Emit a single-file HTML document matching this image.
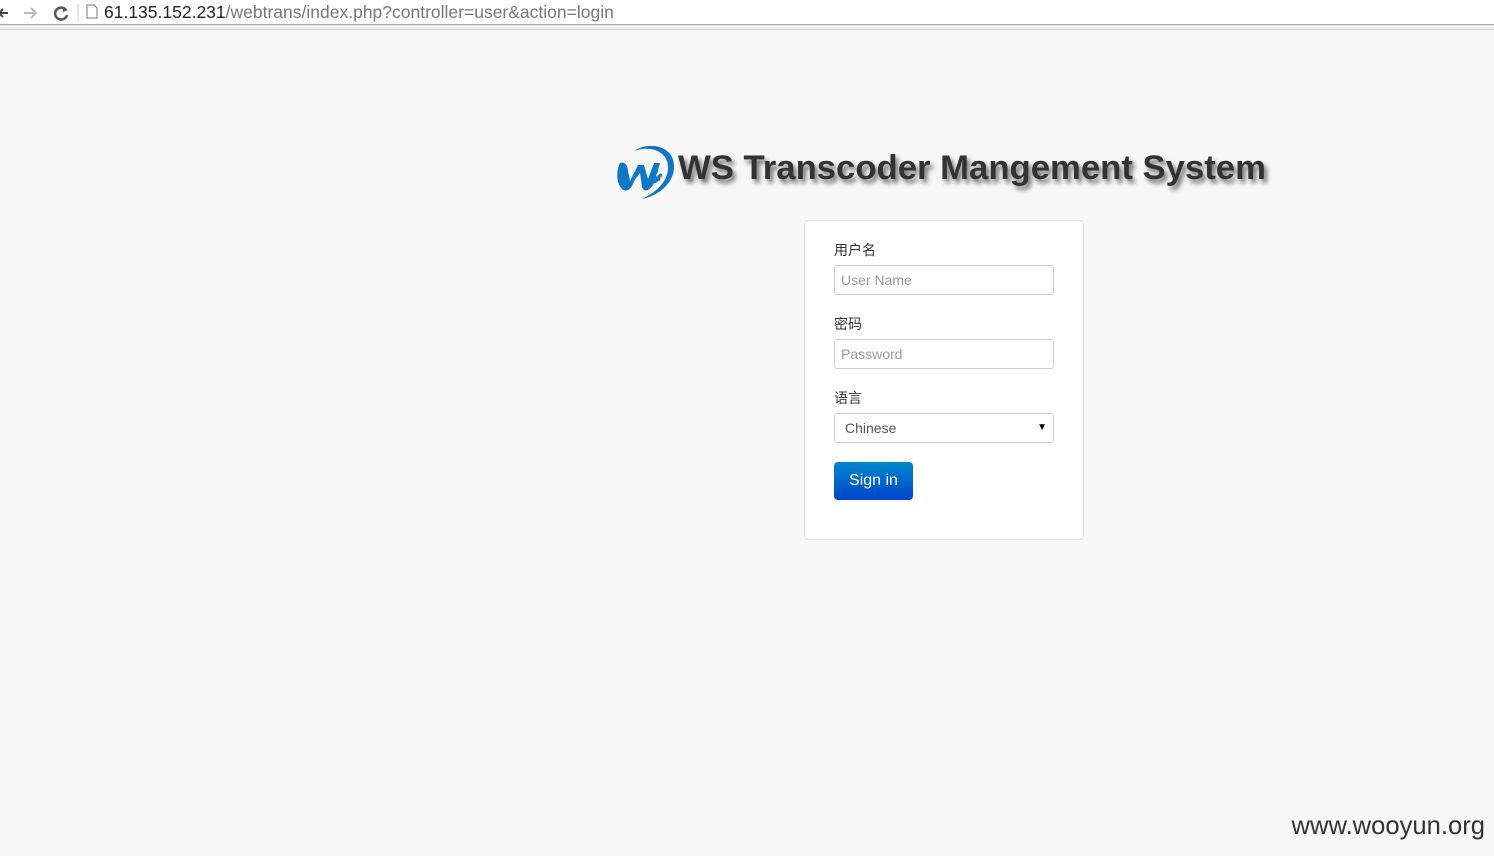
<!DOCTYPE html>
<html><head><meta charset="utf-8"><style>
body{margin:0;width:1494px;height:856px;background:#f7f7f7;font-family:"Liberation Sans","Noto Sans CJK SC",sans-serif;position:relative;overflow:hidden}
.bar{position:absolute;left:0;top:0;width:1494px;height:24px;background:#fff;border-bottom:1px solid #a8a8a8}
.bar2{position:absolute;left:0;top:25px;width:1494px;height:4px;background:#ececec;border-bottom:1px solid #d0d0d0}
.url{position:absolute;left:104px;top:2px;font-size:17.5px;color:#777;white-space:nowrap}
.url b{font-weight:normal;color:#222}
.title{position:absolute;left:678px;top:149px;font-size:34.7px;font-weight:bold;color:#333;text-shadow:3px 4px 5px rgba(0,0,0,.55);white-space:nowrap}
.box{position:absolute;left:804px;top:220px;width:278px;height:318px;background:#fff;border:1px solid #e0e0e0;border-radius:4px}
.lab{position:absolute;left:29px;font-size:14px;color:#333}
.inp{position:absolute;left:29px;width:218px;height:28px;border:1px solid #ccc;border-radius:3px;font-size:14px;color:#999;line-height:28px;text-indent:6px;box-sizing:content-box}
.btn{position:absolute;left:29px;top:241px;width:79px;height:38px;border-radius:4px;background:linear-gradient(#0088cc,#0044cc);color:#fff;font-size:16px;text-align:center;line-height:38px}
.wm{position:absolute;right:9px;top:812px;font-size:25.6px;color:#333}
</style></head><body>
<div class="bar">
<svg style="position:absolute;left:0;top:4px" width="80" height="18"><path d="M0 9h8M3 5l-4 4 4 4" stroke="#444" stroke-width="2" fill="none"/><path d="M24 9h12M31 4l5 5-5 5" stroke="#bbb" stroke-width="2" fill="none"/><path d="M66 6a6 6 0 1 0 1 5" stroke="#555" stroke-width="2.5" fill="none"/><path d="M63 3l5 3-5 2z" fill="#555"/><line x1="78" y1="0" x2="78" y2="18" stroke="#ccc"/></svg>
<svg style="position:absolute;left:86px;top:4px" width="12" height="15"><path d="M1 1h7l3 3v10H1z" fill="#fff" stroke="#777"/></svg>
<div class="url"><b>61.135.152.231</b>/webtrans/index.php?controller=user&amp;action=login</div>
</div>
<div class="bar2"></div>
<svg style="position:absolute;left:614px;top:143px" width="64" height="58" viewBox="0 0 64 58">
<path d="M20 8C34 -2 62 2 60 26C58 44 40 54 28 56C44 48 54 38 54 24C54 8 36 2 20 8z" fill="#1077c4"/>
<path d="M6 20C2 28 2 40 8 46C12 50 18 46 20 38L26 30L28 44C30 50 36 48 40 40L46 20L40 20L34 36L30 22L24 22L16 38L14 28C14 22 10 18 6 20z" fill="#1077c4"/>
<path d="M44 28c-4 0-6 4-3 6c3 2 2 5-2 5M48 32c-3 0-5 3-2 5" stroke="#1077c4" stroke-width="3" fill="none"/>
</svg>
<div class="title">WS Transcoder Mangement System</div>
<div class="box">
<div class="lab" style="top:19px">用户名</div>
<div class="inp" style="top:44px">User Name</div>
<div class="lab" style="top:93px">密码</div>
<div class="inp" style="top:118px">Password</div>
<div class="lab" style="top:167px">语言</div>
<div class="inp" style="top:192px;color:#555;text-indent:10px">Chinese<span style="position:absolute;right:6px;top:0;font-size:10px;color:#000">▼</span></div>
<div class="btn">Sign in</div>
</div>
<div class="wm">www.wooyun.org</div>
</body></html>
